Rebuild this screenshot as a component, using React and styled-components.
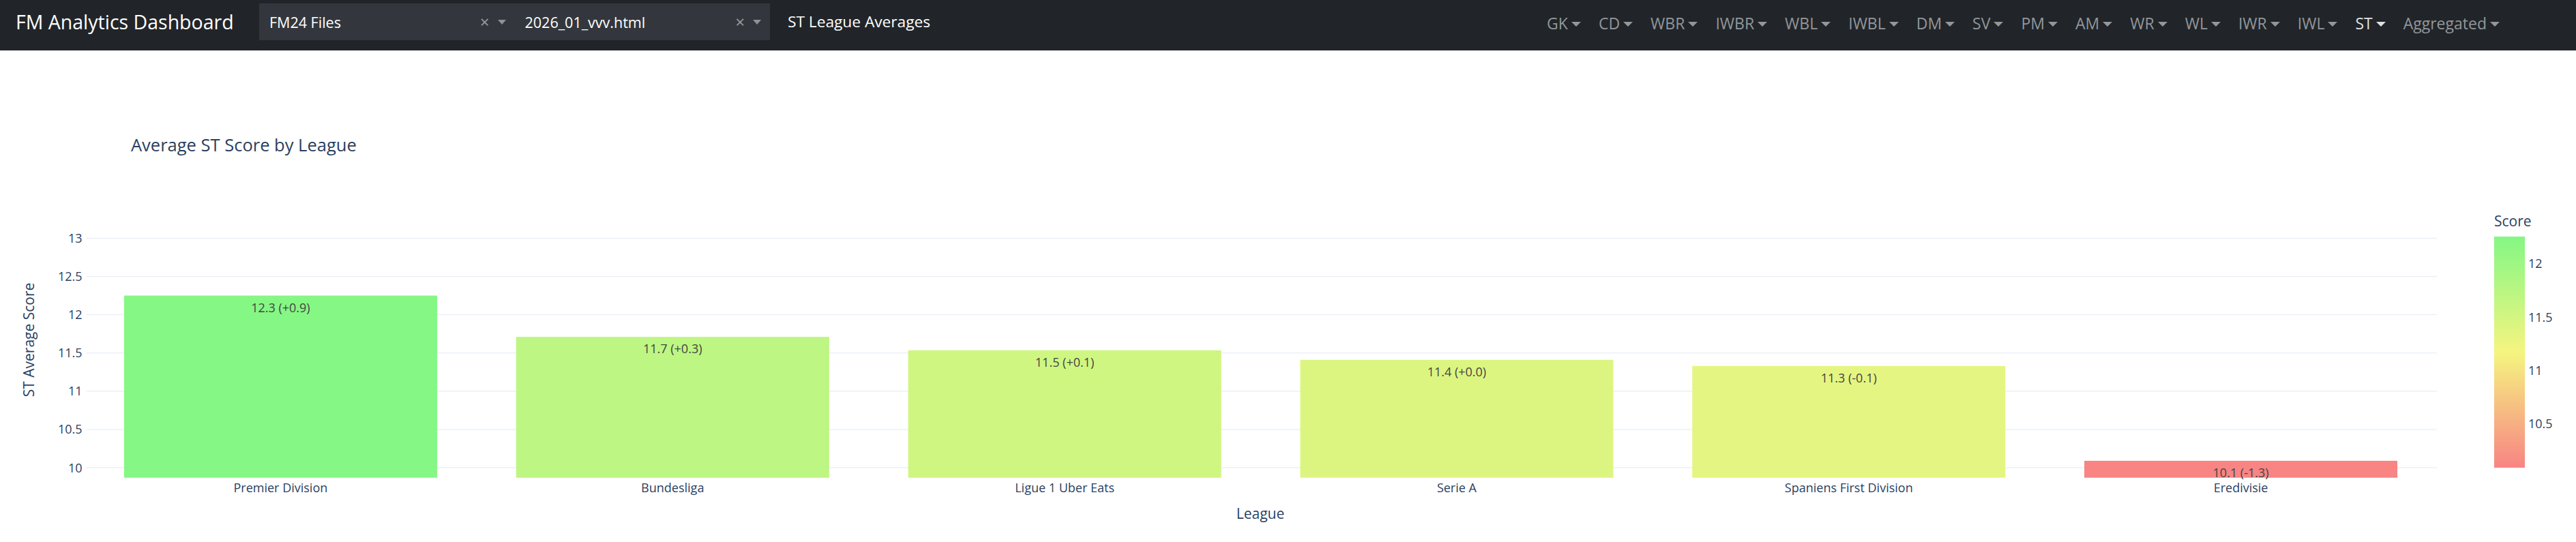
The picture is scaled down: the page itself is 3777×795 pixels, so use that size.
import React from 'react';
import styled, { createGlobalStyle } from 'styled-components';

const GlobalStyle = createGlobalStyle`
  html, body { margin: 0; padding: 0; background: #ffffff; }
  body { font-family: "Open Sans", "Noto Sans", sans-serif; }
  * { box-sizing: border-box; }
`;

const Page = styled.div`
  width: 3777px;
  height: 795px;
  display: flex;
  flex-direction: column;
  background: #fff;
  overflow: hidden;
`;

const Navbar = styled.nav`
  height: 74px;
  flex: none;
  background: #212529;
  display: flex;
  align-items: flex-start;
  padding: 5px 99px 0 23px;
`;

const Brand = styled.div`
  font-family: "Open Sans", sans-serif;
  font-size: 28.5px;
  color: #ffffff;
  line-height: 54px;
  width: 357px;
  white-space: nowrap;
`;

const SelectGroup = styled.div`
  display: flex;
  height: 54px;
`;

const Select = styled.div`
  width: 374.5px;
  height: 54px;
  background: #33373d;
  display: flex;
  align-items: center;
  padding: 0 13px 0 15px;
  font-family: "Open Sans", sans-serif;
`;

const SelectValue = styled.span`
  flex: 1;
  color: #ffffff;
  font-size: 21.5px;
  white-space: nowrap;
`;

const ClearIcon = styled.span`
  color: #9a9c9f;
  font-size: 24px;
  line-height: 1;
  margin-right: 12px;
`;

const SelectArrow = styled.span`
  width: 0;
  height: 0;
  border-style: solid;
  border-width: 7px 6.5px 0 6.5px;
  border-color: #8e9195 transparent transparent transparent;
`;

const PageTitle = styled.div`
  margin-left: 26px;
  color: #ffffff;
  font-size: 22.7px;
  line-height: 54px;
  white-space: nowrap;
`;

const NavList = styled.ul`
  list-style: none;
  margin: 0 0 0 auto;
  padding: 0;
  display: flex;
  height: 58px;
  align-items: center;
`;

const NavItem = styled.li`
  padding: 0 13px;
  font-size: 23px;
  color: ${p => (p.$active ? '#dfe1e3' : '#93969a')};
  display: flex;
  align-items: center;
  white-space: nowrap;
`;

const NavCaret = styled.span`
  display: inline-block;
  margin-left: 5px;
  width: 0;
  height: 0;
  border-top: 7px solid currentColor;
  border-left: 7px solid transparent;
  border-right: 7px solid transparent;
  margin-top: 2px;
`;

const ChartSection = styled.section`
  flex: 1;
  position: relative;
`;

const ChartSvg = styled.svg`
  display: block;
  font-family: "Open Sans", verdana, arial, sans-serif;
`;

const positions = ['GK', 'CD', 'WBR', 'IWBR', 'WBL', 'IWBL', 'DM', 'SV', 'PM', 'AM', 'WR', 'WL', 'IWR', 'IWL', 'ST', 'Aggregated'];

const data = [
  { name: 'Premier Division', v: 12.25, label: '12.3 (+0.9)' },
  { name: 'Bundesliga', v: 11.71, label: '11.7 (+0.3)' },
  { name: 'Ligue 1 Uber Eats', v: 11.535, label: '11.5 (+0.1)' },
  { name: 'Serie A', v: 11.41, label: '11.4 (+0.0)' },
  { name: 'Spaniens First Division', v: 11.33, label: '11.3 (-0.1)' },
  { name: 'Eredivisie', v: 10.09, label: '10.1 (-1.3)' },
];

const CMIN = 10.09;
const CMAX = 12.256;
const LOW = [248, 132, 132];
const MID = [245, 245, 128];
const HIGH = [132, 247, 132];

function colorFor(v) {
  let t = (v - CMIN) / (CMAX - CMIN);
  t = Math.max(0, Math.min(1, t));
  let a, b, f;
  if (t < 0.5) { a = LOW; b = MID; f = t / 0.5; } else { a = MID; b = HIGH; f = (t - 0.5) / 0.5; }
  const c = a.map((x, i) => Math.round(x + (b[i] - x) * f));
  return `rgb(${c[0]},${c[1]},${c[2]})`;
}

const PLOT_LEFT = 124;
const PLOT_RIGHT = 3573;
const CAT_W = (PLOT_RIGHT - PLOT_LEFT) / 6;
const BAR_W = 459;
const Y10 = 612; // svg y of value 10
const UNIT = 112.2;
const BASE_Y = 626.7;
const yOf = v => Y10 - (v - 10) * UNIT;

const ticks = [10, 10.5, 11, 11.5, 12, 12.5, 13];
const cbTicks = ['12', '11.5', '11', '10.5'];

function Chart() {
  return (
    <ChartSvg width="3777" height="721" viewBox="0 0 3777 721">
      <defs>
        <linearGradient id="cb" x1="0" y1="1" x2="0" y2="0">
          <stop offset="0" stopColor={`rgb(${LOW.join(',')})`} />
          <stop offset="0.5" stopColor={`rgb(${MID.join(',')})`} />
          <stop offset="1" stopColor={`rgb(${HIGH.join(',')})`} />
        </linearGradient>
      </defs>
      <text x="192" y="147.7" fontSize="25.5" fill="#2a3f5f">Average ST Score by League</text>
      {ticks.map(t => (
        <g key={t}>
          <line x1={PLOT_LEFT + 3} x2={PLOT_RIGHT} y1={yOf(t)} y2={yOf(t)} stroke="#ebf0f8" strokeWidth="1.5" />
          <text x="120.5" y={yOf(t) + 6.5} fontSize="18" fill="#2a3f5f" textAnchor="end">{t}</text>
        </g>
      ))}
      {data.map((d, i) => {
        const cx = PLOT_LEFT + CAT_W * (i + 0.5);
        const top = yOf(d.v);
        return (
          <g key={d.name}>
            <rect x={cx - BAR_W / 2} y={top} width={BAR_W} height={BASE_Y - top} fill={colorFor(d.v)} />
            <text x={cx} y={top + 24.3} fontSize="18" fill="#444" textAnchor="middle">{d.label}</text>
            <text x={cx} y="647.7" fontSize="18" fill="#2a3f5f" textAnchor="middle">{d.name}</text>
          </g>
        );
      })}
      <text x="1848" y="687" fontSize="21" fill="#2a3f5f" textAnchor="middle">League</text>
      <text transform="translate(49.5 424.5) rotate(-90)" fontSize="21" fill="#2a3f5f" textAnchor="middle">ST Average Score</text>
      <text x="3657" y="257.7" fontSize="21" fill="#2a3f5f">Score</text>
      <rect x="3657" y="273" width="45" height="339" fill="url(#cb)" />
      {cbTicks.map((t, i) => (
        <text key={t} x="3707" y={319.3 + i * 78.2} fontSize="18" fill="#2a3f5f">{t}</text>
      ))}
    </ChartSvg>
  );
}

export default function App() {
  return (
    <Page>
      <GlobalStyle />
      <Navbar>
        <Brand>FM Analytics Dashboard</Brand>
        <SelectGroup>
          <Select>
            <SelectValue>FM24 Files</SelectValue>
            <ClearIcon>×</ClearIcon>
            <SelectArrow />
          </Select>
          <Select>
            <SelectValue>2026_01_vvv.html</SelectValue>
            <ClearIcon>×</ClearIcon>
            <SelectArrow />
          </Select>
        </SelectGroup>
        <PageTitle>ST League Averages</PageTitle>
        <NavList>
          {positions.map(p => (
            <NavItem key={p} $active={p === 'ST'}>
              {p}
              <NavCaret />
            </NavItem>
          ))}
        </NavList>
      </Navbar>
      <ChartSection>
        <Chart />
      </ChartSection>
    </Page>
  );
}
